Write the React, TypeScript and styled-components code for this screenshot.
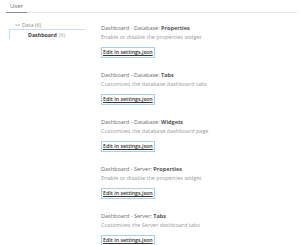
import React from "react";
import styled, { createGlobalStyle } from "styled-components";

const Global = createGlobalStyle`
  html, body { margin: 0; padding: 0; background: #ffffff; }
  body { font-family: "Open Sans", "Noto Sans", sans-serif; }
`;

const Page = styled.div`
  width: 300px;
  height: 245px;
  overflow: hidden;
  background: #fff;
`;

const Header = styled.div`
  margin: 0 3px 0 6px;
  height: 12px;
  border-bottom: 1px solid #e6e6e6;
  display: flex;
  align-items: flex-end;
`;

const Tab = styled.div`
  padding: 1px 4px 0;
  height: 13px;
  box-sizing: border-box;
  line-height: 11px;
  font-size: 6px;
  color: #6a6a6a;
  box-shadow: inset 0 -1px 0 #8a8a8a;
  margin-bottom: -1px;
`;

const Body = styled.div`
  display: flex;
`;

const Tree = styled.div`
  width: 95px;
  padding-top: 8px;
  flex-shrink: 0;
`;

const TreeGroup = styled.div`
  display: flex;
  align-items: center;
  height: 7px;
  padding-left: 15px;
  font-size: 5.3px;
  color: #8a8a8a;
  gap: 2px;
`;

const TreeItem = styled.div`
  margin: 1px 0 0 9px;
  width: 76px;
  height: 10px;
  border-top: 1px solid #c4def3;
  border-left: 1px solid #c4def3;
  display: flex;
  align-items: center;
  padding-left: 18px;
  box-sizing: border-box;
  font-size: 5.3px;
  gap: 2px;
`;

const ItemName = styled.span`
  font-weight: 700;
  color: #444;
`;

const Count = styled.span`
  color: #9a9a9a;
`;

const Content = styled.div`
  padding-top: 10.5px;
  display: flex;
  flex-direction: column;
  gap: 13px;
  padding-left: 6px;
`;

const Setting = styled.div`
  display: flex;
  flex-direction: column;
  align-items: flex-start;
`;

const Title = styled.div`
  font-size: 5.5px;
  line-height: 9px;
  color: #6a6a6a;
  white-space: nowrap;
`;

const Bold = styled.span`
  font-weight: 700;
  color: #555;
`;

const Desc = styled.div`
  font-size: 5.5px;
  line-height: 9px;
  color: #9a9a9a;
  white-space: nowrap;
`;

const EditButton = styled.div`
  margin-top: 5.5px;
  height: 10.5px;
  box-sizing: border-box;
  border: 1px solid #a3cff1;
  padding: 0 1px;
  display: flex;
  align-items: center;
  font-size: 5.3px;
  font-weight: 600;
  color: #333;
  text-decoration: underline;
  white-space: nowrap;
`;

const Chevron = () => (
  <svg width="5" height="4" viewBox="0 0 5 4">
    <path d="M0.5 1 L2.5 3 L4.5 1" fill="none" stroke="#8a8a8a" strokeWidth="0.7" />
  </svg>
);

const settings = [
  { prefix: "Dashboard - Database: ", name: "Properties", desc: "Enable or disable the properties widget" },
  { prefix: "Dashboard - Database: ", name: "Tabs", desc: "Customizes the database dashboard tabs" },
  { prefix: "Dashboard - Database: ", name: "Widgets", desc: "Customizes the database dashboard page" },
  { prefix: "Dashboard - Server: ", name: "Properties", desc: "Enable or disable the properties widget" },
  { prefix: "Dashboard - Server: ", name: "Tabs", desc: "Customizes the Server dashboard tabs" },
];

export default function App() {
  return (
    <Page>
      <Global />
      <Header>
        <Tab>User</Tab>
      </Header>
      <Body>
        <Tree>
          <TreeGroup>
            <Chevron />
            <span>Data (6)</span>
          </TreeGroup>
          <TreeItem>
            <ItemName>Dashboard</ItemName>
            <Count>(6)</Count>
          </TreeItem>
        </Tree>
        <Content>
          {settings.map((s, i) => (
            <Setting key={i}>
              <Title>
                {s.prefix}
                <Bold>{s.name}</Bold>
              </Title>
              <Desc>{s.desc}</Desc>
              <EditButton>Edit in settings.json</EditButton>
            </Setting>
          ))}
        </Content>
      </Body>
    </Page>
  );
}
